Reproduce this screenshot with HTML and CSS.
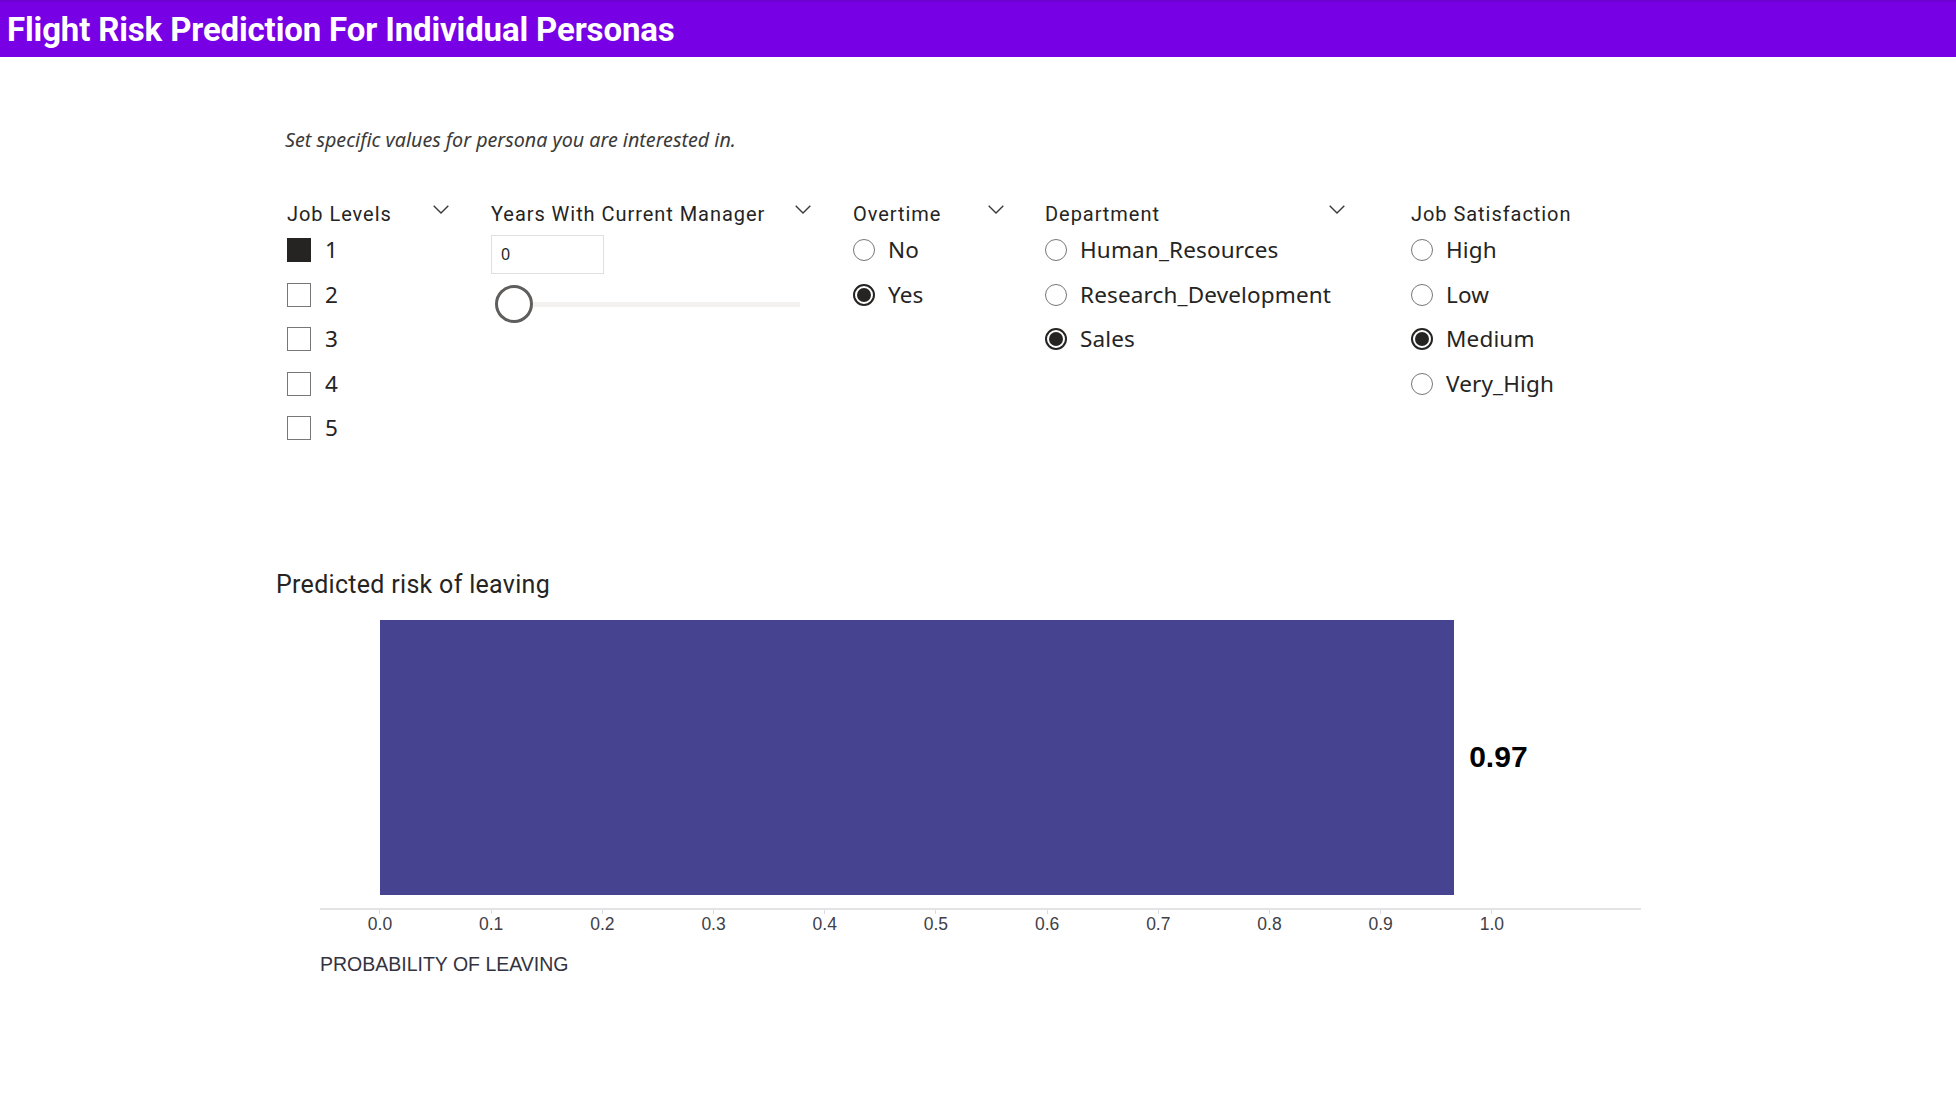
FILE: index.html
```html
<!DOCTYPE html>
<html lang="en">
<head>
<meta charset="utf-8">
<title>Flight Risk Prediction For Individual Personas</title>
<link rel="stylesheet" href="styles.css">
</head>
<body>
<header class="topbar">
  <h1 class="topbar-title">Flight Risk Prediction For Individual Personas</h1>
</header>
<main class="page">
  <p class="intro">Set specific values for persona you are interested in.</p>

  <section class="filters">
    <div class="slicer slicer-levels">
      <div class="slicer-head">
        <span class="slicer-title">Job Levels</span>
        <svg class="chev" viewBox="0 0 16 9" width="16" height="9"><path d="M0.7 0.7 L8 8 L15.3 0.7" fill="none" stroke="#3b3a39" stroke-width="1.4"/></svg>
      </div>
      <ul class="options">
        <li class="option"><span class="check is-on"></span><span class="opt-label">1</span></li>
        <li class="option"><span class="check"></span><span class="opt-label">2</span></li>
        <li class="option"><span class="check"></span><span class="opt-label">3</span></li>
        <li class="option"><span class="check"></span><span class="opt-label">4</span></li>
        <li class="option"><span class="check"></span><span class="opt-label">5</span></li>
      </ul>
    </div>

    <div class="slicer slicer-years">
      <div class="slicer-head">
        <span class="slicer-title">Years With Current Manager</span>
        <svg class="chev" viewBox="0 0 16 9" width="16" height="9"><path d="M0.7 0.7 L8 8 L15.3 0.7" fill="none" stroke="#3b3a39" stroke-width="1.4"/></svg>
      </div>
      <div class="num-box">0</div>
      <div class="slider">
        <span class="slider-track"></span>
        <span class="slider-thumb"></span>
      </div>
    </div>

    <div class="slicer slicer-overtime">
      <div class="slicer-head">
        <span class="slicer-title">Overtime</span>
        <svg class="chev" viewBox="0 0 16 9" width="16" height="9"><path d="M0.7 0.7 L8 8 L15.3 0.7" fill="none" stroke="#3b3a39" stroke-width="1.4"/></svg>
      </div>
      <ul class="options">
        <li class="option"><span class="radio"></span><span class="opt-label">No</span></li>
        <li class="option"><span class="radio is-on"></span><span class="opt-label">Yes</span></li>
      </ul>
    </div>

    <div class="slicer slicer-dept">
      <div class="slicer-head">
        <span class="slicer-title">Department</span>
        <svg class="chev" viewBox="0 0 16 9" width="16" height="9"><path d="M0.7 0.7 L8 8 L15.3 0.7" fill="none" stroke="#3b3a39" stroke-width="1.4"/></svg>
      </div>
      <ul class="options">
        <li class="option"><span class="radio"></span><span class="opt-label">Human_Resources</span></li>
        <li class="option"><span class="radio"></span><span class="opt-label">Research_Development</span></li>
        <li class="option"><span class="radio is-on"></span><span class="opt-label">Sales</span></li>
      </ul>
    </div>

    <div class="slicer slicer-sat">
      <div class="slicer-head">
        <span class="slicer-title">Job Satisfaction</span>
      </div>
      <ul class="options">
        <li class="option"><span class="radio"></span><span class="opt-label">High</span></li>
        <li class="option"><span class="radio"></span><span class="opt-label">Low</span></li>
        <li class="option"><span class="radio is-on"></span><span class="opt-label">Medium</span></li>
        <li class="option"><span class="radio"></span><span class="opt-label">Very_High</span></li>
      </ul>
    </div>
  </section>

  <section class="chart">
    <h2 class="chart-title">Predicted risk of leaving</h2>
    <div class="chart-body">
      <div class="plot">
        <div class="bar-row">
          <div class="bar" style="width: 96.6%"></div>
          <span class="bar-value">0.97</span>
        </div>
      </div>
      <div class="axis-line"></div>
      <div class="ticks">
        <div class="tick"><span class="tick-mark"></span><span class="tick-label">0.0</span></div>
        <div class="tick"><span class="tick-mark"></span><span class="tick-label">0.1</span></div>
        <div class="tick"><span class="tick-mark"></span><span class="tick-label">0.2</span></div>
        <div class="tick"><span class="tick-mark"></span><span class="tick-label">0.3</span></div>
        <div class="tick"><span class="tick-mark"></span><span class="tick-label">0.4</span></div>
        <div class="tick"><span class="tick-mark"></span><span class="tick-label">0.5</span></div>
        <div class="tick"><span class="tick-mark"></span><span class="tick-label">0.6</span></div>
        <div class="tick"><span class="tick-mark"></span><span class="tick-label">0.7</span></div>
        <div class="tick"><span class="tick-mark"></span><span class="tick-label">0.8</span></div>
        <div class="tick"><span class="tick-mark"></span><span class="tick-label">0.9</span></div>
        <div class="tick"><span class="tick-mark"></span><span class="tick-label">1.0</span></div>
      </div>
      <div class="axis-title">PROBABILITY OF LEAVING</div>
    </div>
  </section>
</main>
</body>
</html>
```

FILE: styles.css
```css
* { box-sizing: border-box; }

html, body {
  margin: 0;
  padding: 0;
  background: #ffffff;
}

body {
  width: 1956px;
  height: 1098px;
  overflow: hidden;
  font-family: "Noto Sans", "Open Sans", sans-serif;
  color: #252423;
}

/* ---------- top bar ---------- */
.topbar {
  height: 57px;
  background: #7800e4;
  border-top: 2px solid #6e00d2;
  padding-left: 7px;
  display: flex;
  align-items: center;
}

.topbar-title {
  margin: 0;
  font-family: Roboto, "DejaVu Sans Condensed", sans-serif;
  font-weight: 700;
  font-size: 33px;
  letter-spacing: -0.15px;
  color: #ffffff;
  line-height: 1;
}

/* ---------- page ---------- */
.intro {
  margin: 70px 0 0 285px;
  font-family: "Noto Sans", "Open Sans", sans-serif;
  font-style: italic;
  font-size: 19.7px;
  line-height: 26px;
  color: #3b3a39;
}

/* ---------- filters ---------- */
.filters {
  display: flex;
  margin: 47px 0 0 287px;
  align-items: flex-start;
}

.slicer-levels { width: 204px; }
.slicer-years { width: 362px; }
.slicer-overtime { width: 192px; }
.slicer-dept { width: 366px; }
.slicer-sat { width: 300px; }

.slicer-levels .slicer-head { width: 162px; }
.slicer-years .slicer-head { width: 320px; }
.slicer-overtime .slicer-head { width: 151px; }
.slicer-dept .slicer-head { width: 300px; }

.slicer-head {
  height: 28px;
  display: flex;
  justify-content: space-between;
  align-items: flex-start;
}

.slicer-title {
  font-family: Roboto, sans-serif;
  font-size: 20px;
  line-height: 28px;
  letter-spacing: 0.95px;
  color: #252423;
  white-space: nowrap;
}

.chev {
  margin-top: 5px;
  display: block;
}

.options {
  list-style: none;
  margin: 0;
  padding: 0;
}

.option {
  height: 44.5px;
  display: flex;
  align-items: center;
}

.opt-label {
  font-size: 22.5px;
  line-height: 28px;
  letter-spacing: 0.15px;
  color: #252423;
  white-space: nowrap;
}

.check {
  width: 24px;
  height: 24px;
  border: 1.5px solid #797775;
  background: #ffffff;
  margin-right: 14px;
  flex: none;
}

.check.is-on {
  background: #252423;
  border-color: #252423;
}

.radio {
  width: 22px;
  height: 22px;
  border: 1.5px solid #797775;
  border-radius: 50%;
  background: #ffffff;
  margin-right: 13px;
  flex: none;
  display: flex;
  align-items: center;
  justify-content: center;
}

.radio.is-on {
  border: 2px solid #252423;
}

.radio.is-on::after {
  content: "";
  width: 14px;
  height: 14px;
  border-radius: 50%;
  background: #252423;
}

/* number box + slider */
.num-box {
  width: 113px;
  height: 39px;
  margin-top: 7px;
  border: 1.5px solid #e1dfdd;
  font-family: "Noto Sans", sans-serif;
  font-size: 16px;
  line-height: 36px;
  padding-left: 9px;
  color: #252423;
}

.slider {
  margin-top: 11px;
  margin-left: 4px;
  width: 305px;
  height: 38px;
  display: flex;
  align-items: center;
}

.slider-track {
  width: 305px;
  height: 5px;
  background: #f3f2f1;
  flex: none;
}

.slider-thumb {
  width: 38px;
  height: 38px;
  border-radius: 50%;
  border: 3px solid #605e5c;
  background: #ffffff;
  flex: none;
  margin-left: -305px;
}

/* ---------- chart ---------- */
.chart {
  margin: 119px 0 0 276px;
}

.chart-title {
  margin: 0;
  font-family: Roboto, sans-serif;
  font-weight: 400;
  font-size: 25px;
  line-height: 30px;
  letter-spacing: 0.3px;
  color: #252423;
}

.chart-body {
  margin-left: 44px;
  width: 1321px;
  margin-top: 20px;
}

.plot {
  margin-left: 60px;
  width: 1112px;
}

.bar-row {
  display: flex;
  align-items: center;
  height: 275px;
}

.bar {
  height: 275px;
  background: #464490;
  flex: none;
}

.bar-value {
  margin-left: 15px;
  font-family: "Liberation Sans", Arial, sans-serif;
  font-weight: 700;
  font-size: 30px;
  color: #000000;
  white-space: nowrap;
}

.axis-line {
  margin-top: 13px;
  height: 2px;
  background: #e3e3e6;
  width: 1321px;
}

.ticks {
  display: flex;
  margin-left: 4.4px;
}

.tick {
  width: 111.2px;
  flex: none;
  display: flex;
  flex-direction: column;
  align-items: center;
}

.tick-mark {
  width: 1px;
  height: 4px;
  background: #dcdce0;
}

.tick-label {
  font-family: "Liberation Sans", Arial, sans-serif;
  font-size: 17.5px;
  line-height: 20px;
  color: #404048;
}

.axis-title {
  margin-top: 19px;
  font-family: "Liberation Sans", Arial, sans-serif;
  font-size: 19.5px;
  line-height: 22px;
  color: #333340;
}
```
